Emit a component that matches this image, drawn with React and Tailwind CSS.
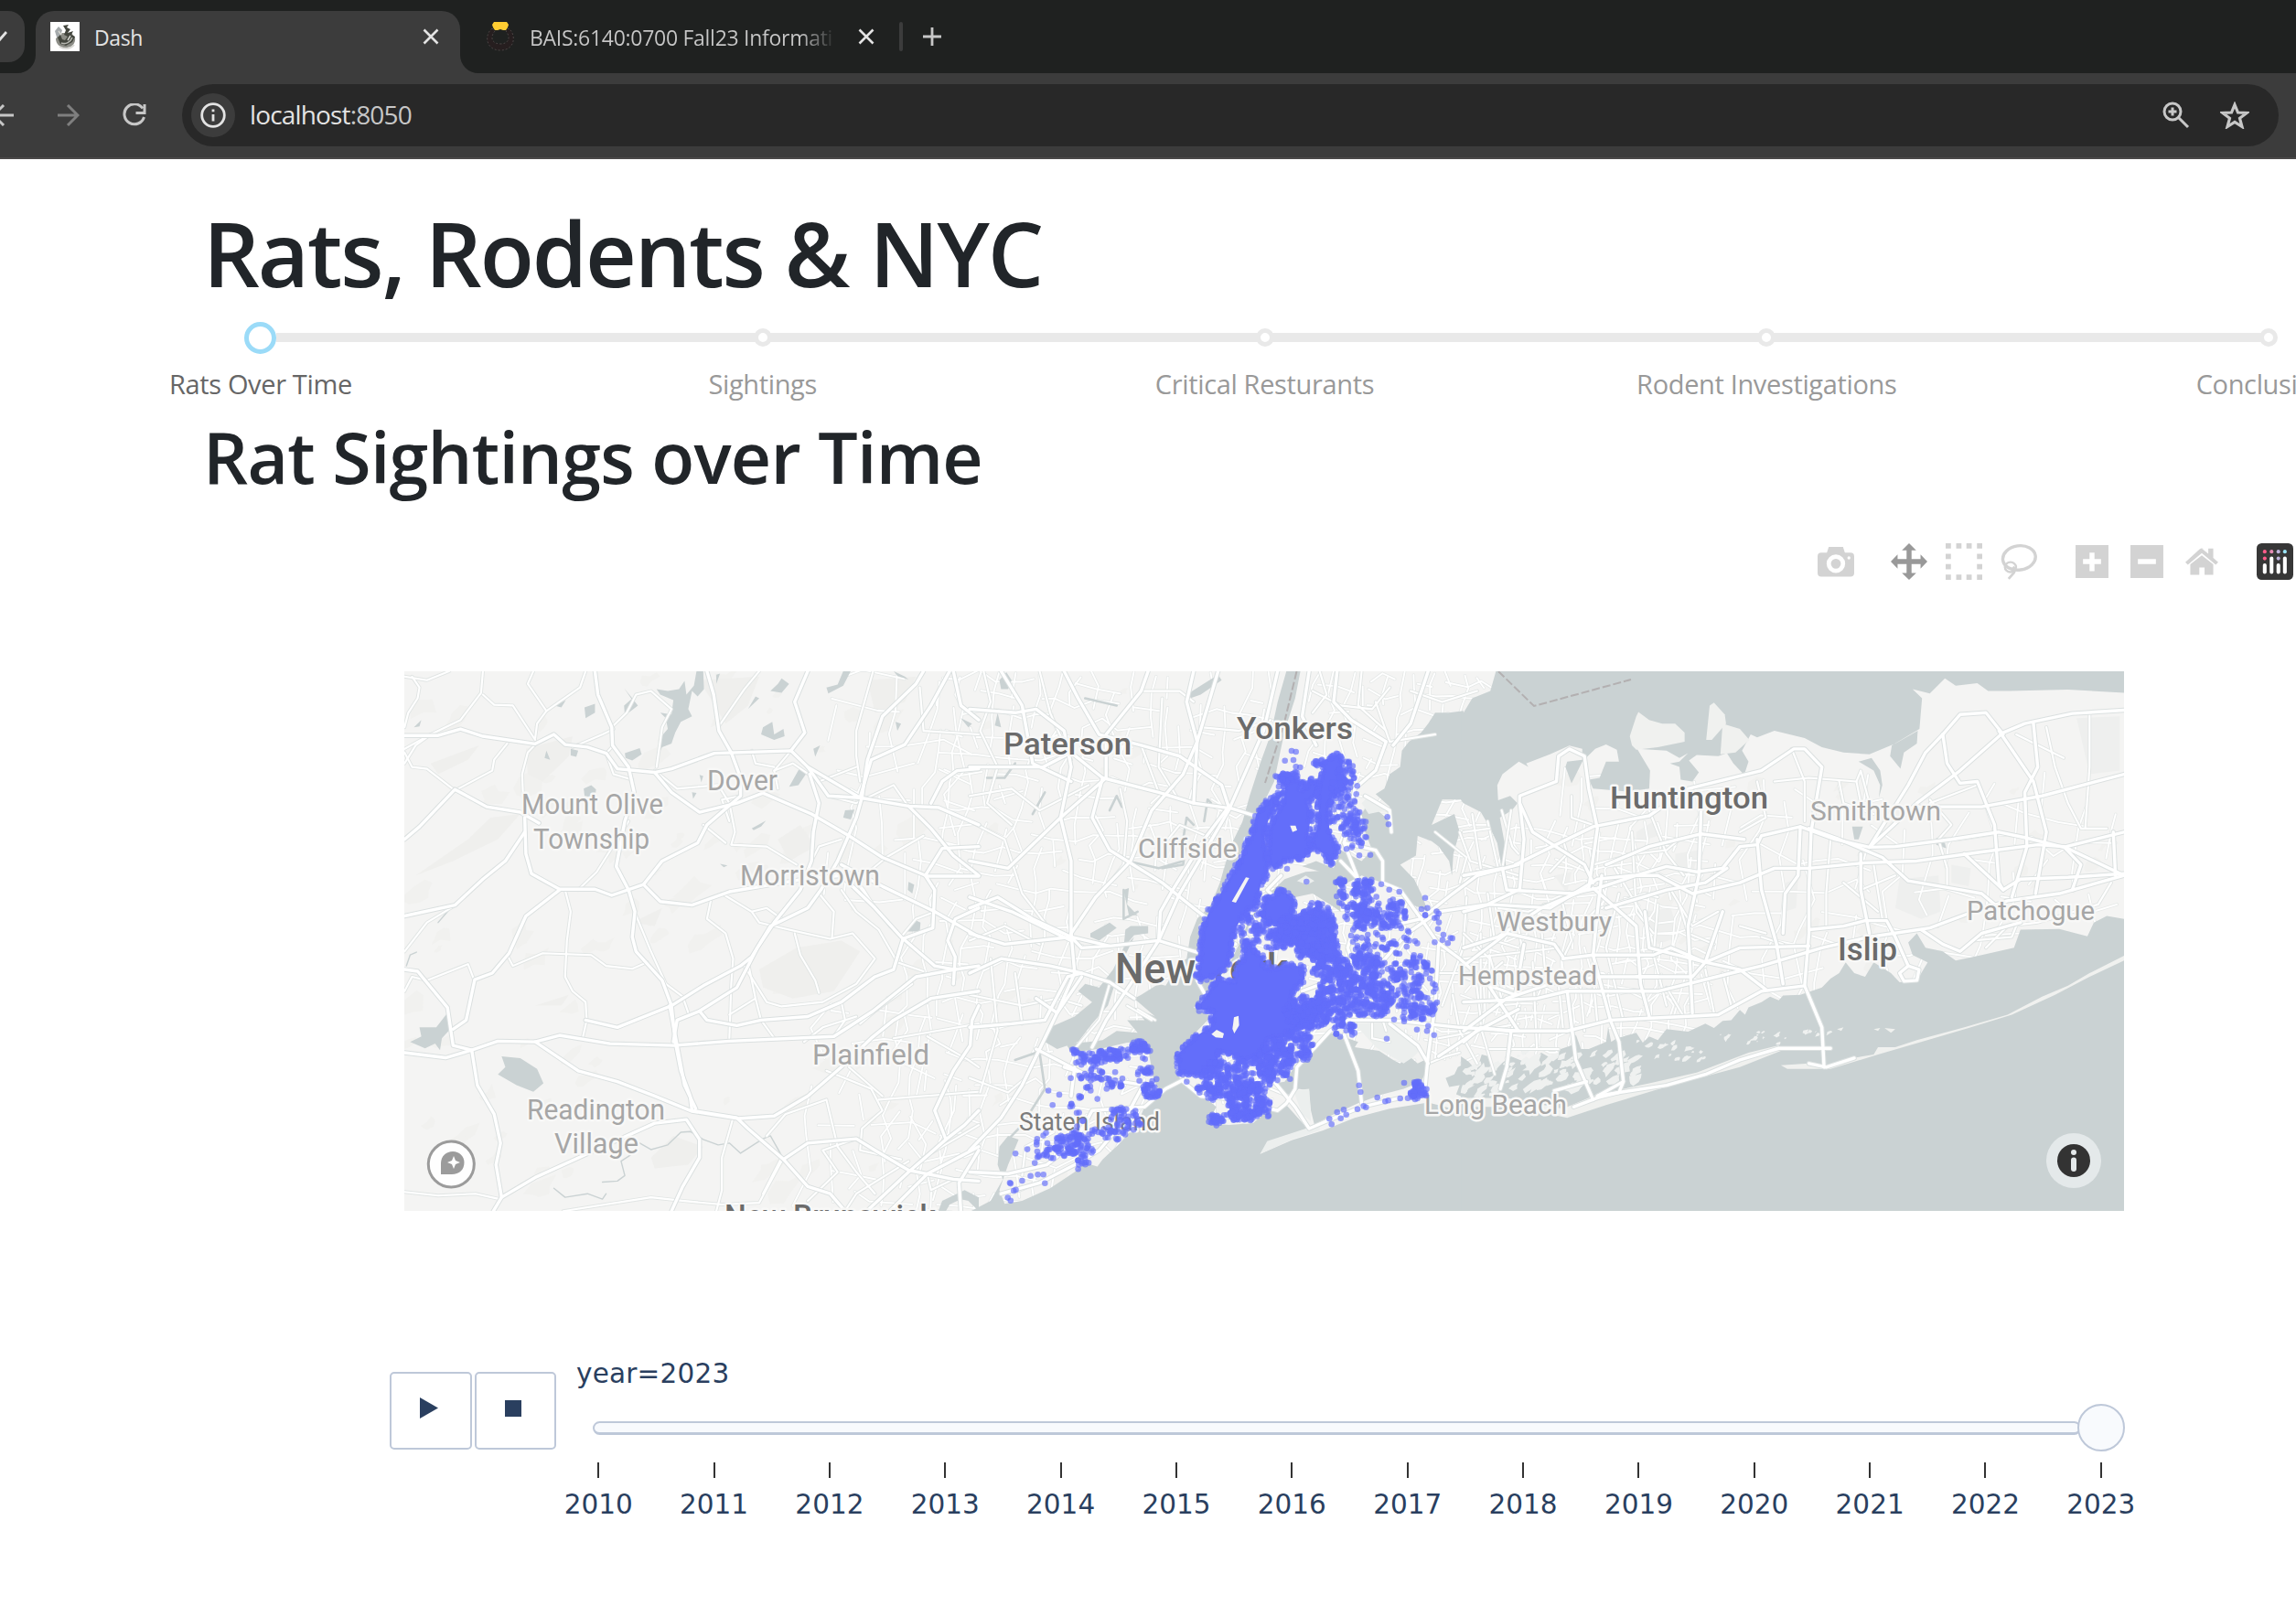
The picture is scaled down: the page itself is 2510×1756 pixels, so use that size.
import React from "react";

/* ---------- seeded random helpers ---------- */
function rng(seed) {
  let s = seed;
  return () => {
    s = (s * 1664525 + 1013904223) % 4294967296;
    return s / 4294967296;
  };
}

/* Each drawing sheet of the map has its own coordinate grid. */
const WEST = "translate(430 720) scale(0.40816 0.39541)";
const CENTER = "translate(1060 720) scale(0.38265 0.39541)";
const EAST = "translate(1600 720) scale(0.47194 0.39541)";
const CITY = "translate(1280 800) scale(0.33333)";

const westMajor = [
  "30,213 120,213 180,195 240,215 380,236 430,210 460,238 520,245 570,262 600,305 700,315 745,305 860,262 1065,255 1110,300 1165,380 1250,385 1380,408 1460,412 1568,460",
  "540,35 548,100 585,190 587,240 630,300 645,370 620,450 597,575 630,640 647,700 640,770 650,810 720,890 745,960 755,1060 770,1140 795,1210 800,1250 920,1270 950,1300 1045,1385 1110,1460 1170,1480 1210,1528",
  "840,35 858,100 872,200 905,260 930,330 930,380 840,460 815,510 720,560 670,625 585,655 540,638 445,638 370,595 355,540 352,440",
  "30,500 70,465 165,362 250,410 340,425 390,455",
  "30,712 165,682 240,610 300,560 352,480",
  "445,640 355,712 310,815 265,870 218,888 195,1000 160,1025",
  "30,860 65,865 145,965 160,1070 210,1083 280,1058 380,1060 445,1042 580,1065 750,1070 900,1058 1180,1045 1285,975 1400,880 1505,860 1568,850",
  "30,1090 140,1104 210,1083 225,1180 270,1260 287,1340 275,1400 290,1490 268,1528",
  "380,1060 495,1140 600,1170 700,1210 800,1252 925,1272 1020,1265 1110,1210 1200,1130 1280,1050 1340,1000 1440,940 1568,920",
  "290,1490 380,1435 540,1360 700,1285 785,1275 820,1330 820,1380 775,1460 745,1528",
  "515,1000 600,1020 745,960 830,905 930,850 960,825 1010,740 1110,690 1145,640 1190,560 1240,440 1255,385 1270,280 1310,160 1400,70 1420,35",
  "750,1060 760,1000 820,975 920,910 975,800 1020,730 1090,640 1120,560 1125,480 1140,400 1115,320",
  "1065,255 1102,205 1075,120 1110,35",
  "1110,300 1250,385 1280,280 1370,238 1440,130 1490,35",
  "700,315 745,370 820,425 920,400 990,372 1120,430 1220,490 1310,550 1430,602 1568,602",
  "670,625 715,672 800,682 900,645 1100,610 1200,600 1290,690 1360,770 1450,850 1505,860",
  "1200,570 1310,630 1450,700 1568,770",
  "1380,408 1440,470 1500,545 1568,600",
  "820,975 840,1000 920,1015 985,1000 1110,990 1200,950 1290,880 1340,860 1365,775 1445,745 1450,640 1425,600 1470,525 1568,520",
  "1045,1385 1110,1340 1240,1328 1290,1360 1380,1415 1500,1440 1568,1445",
  "1268,1528 1380,1420 1480,1330 1530,1290 1568,1250",
  "1330,1528 1430,1425 1568,1350",
  "1500,900 1505,825 1485,780 1505,720 1568,690",
  "1500,35 1520,130 1568,170",
  "1440,400 1470,340 1510,310 1568,305",
  "1480,1330 1450,1250 1500,1140 1545,1070 1550,1000 1568,960",
  "1520,1528 1515,1450 1568,1360",
  "740,960 780,1180 810,1245",
];
const westMinor = [
  "50,50 70,80 65,110 40,150 30,190", "240,35 235,95 180,170 100,210 30,250",
  "240,100 270,128 320,130 380,225", "380,220 385,180 410,145 360,70 375,35",
  "410,145 500,80 515,35", "305,235 270,280 265,310 165,365 90,305 50,300 30,260",
  "350,440 345,320 360,260 380,238", "585,190 625,150 650,100 690,90 745,140 720,190 705,300",
  "870,190 940,85 980,35", "700,310 760,360 870,350 900,400 915,480 905,515 1000,520 1080,570",
  "830,460 890,510", "1285,35 1240,200 1240,270 1250,340", "630,450 545,590 495,640",
  "460,640 475,700 465,780 460,880 480,920 515,950 518,1000 508,1045",
  "305,820 320,850 400,815 530,820 570,850 640,858 680,840", "850,670 840,720 890,760 910,830 905,900 900,1050",
  "650,710 690,810 730,900 775,935 790,980", "880,650 960,700 980,730 1060,750 1170,775 1230,760 1290,830 1240,900 1150,950 1040,962 1000,950 940,850",
  "1075,760 1090,820 1130,890 1140,925", "1200,640 1240,700 1300,750 1350,840 1420,865",
  "1140,650 1180,700 1175,770", "1240,620 1330,740 1360,770", "950,840 970,940 985,1000 1020,1050",
  "1000,1320 1050,1260 1160,1220 1190,1350 1240,1420 1290,1480", "1160,1140 1280,1190 1310,1250 1255,1300 1250,1360 1360,1385",
  "910,1270 880,1380 880,1470 865,1528", "455,1528 690,1490 780,1500 880,1510 980,1505 1040,1390",
  "30,1475 120,1485 220,1480 285,1495", "1040,1380 990,1480", "30,920 50,880 90,890 200,845 215,885",
  "1300,1220 1540,1200 1568,1198", "1220,1130 1310,1210", "1340,1050 1568,1010", "1430,1045 1540,1110 1568,1130",
  "1410,80 1420,200 1568,210", "1240,1328 1150,1360 1190,1420 1110,1500", "30,810 90,730 170,680",
  "1020,310 1070,290 1140,340 1240,300", "1165,380 1240,400 1340,350 1380,410", "1420,490 1320,550 1250,610",
  "1450,700 1400,720 1360,770", "900,985 970,940", "960,255 970,290 1020,300",
  "30,50 90,60 150,35", "30,290 60,240 100,210", "590,240 570,262 590,320 640,335", "480,245 560,210 590,195",
  "930,380 880,390 900,450", "1030,360 1020,310 1065,255", "1200,500 1140,520 1120,560", "1040,720 1000,690 960,700",
  "1290,690 1260,640 1200,570", "1180,1045 1210,1000 1200,950", "1250,1010 1290,975 1390,900", "1100,1060 1150,1020 1240,990",
  "1210,1528 1240,1480 1380,1390", "1430,1425 1440,1470 1500,1440", "1330,1470 1420,1380 1568,1290",
];
const centerMajor = [
  "0,300 80,300 210,300 290,260 380,330 540,370 640,400 750,415 815,435",
  "0,870 90,830 230,850 320,870 400,895 470,940",
  "0,1020 120,1010 215,1000 280,880 320,870",
  "0,1360 90,1270 150,1180 200,1080 250,980 300,870 290,760 360,660 460,560 520,420 610,320 650,230 620,120 640,35",
  "0,690 80,660 180,720 290,770 400,795 540,780 660,815",
  "270,35 310,110 370,210 490,240 600,270 720,350 740,410",
  "0,140 130,150 190,140 270,200 290,300 260,440 290,560 290,770",
  "0,560 110,580 260,440 390,330 390,210 490,90 510,35",
  "380,330 350,440 400,530 550,620 640,690 680,720",
  "540,780 600,650 680,520 740,420 790,310 840,200 880,35",
  "740,410 670,500 580,640 545,700 540,780 460,900 390,1000 350,1075",
  "90,35 150,130 180,290 290,340", "710,35 650,230 640,400",
  "0,1420 110,1425 220,1400 300,1340 350,1250 500,1240 560,1190 610,1165",
  "610,1170 660,1210 760,1220 880,1250 905,1230 930,1190 935,1130 1030,1030 1080,1000 1200,1000 1400,1020 1568,1030",
  "90,1480 200,1450 300,1400 370,1360 440,1280 490,1190",
  "1050,35 1040,120 1090,170 1190,230 1160,310 1100,360 1080,470 1070,510",
  "1070,510 1160,530 1180,560 1180,620 1230,640 1290,720 1340,790 1330,960 1310,1100 1300,1200",
  "1070,510 1110,610 1110,700 1080,800 1100,860 1060,930",
  "1060,560 1110,610", "1568,570 1450,600 1380,650 1290,720 1200,740",
  "1568,640 1480,680 1340,700 1250,760 1160,860 1060,880 950,920",
  "650,830 650,890 690,960", "890,600 850,640 900,690", "760,740 800,780",
  "870,1170 930,1240 970,1300 1030,1275 1120,1240 1230,1215",
  "1070,1040 1110,1140 1120,1230", "1200,1010 1280,1070 1310,1120",
  "1330,780 1400,830 1480,900 1568,1030", "1568,970 1450,1030 1340,1100", "1210,240 1260,180 1310,35",
  "1030,380 1080,470", "970,35 950,160 990,240", "1130,380 1200,420 1205,480",
  "660,740 760,790", "270,1130 370,1160 500,1180", "290,1210 300,1130", "190,1080 330,1150",
  "0,760 100,790 290,770 320,800 400,795", "0,660 120,700 290,780", "190,940 250,980 320,880",
];
const centerMinor = [
  "0,450 100,500 150,650 230,750", "0,780 100,740 200,790", "40,35 60,120 30,200 80,300 50,400 120,460",
  "200,35 230,150 290,280", "0,380 120,360 200,420 340,350", "430,360 450,450 440,570 400,620",
  "490,240 540,370", "550,110 540,300 590,380", "490,90 600,90 640,120", "660,190 770,200 860,170",
  "700,500 600,460 550,520", "0,930 150,960 250,940 320,960", "130,870 150,1010", "60,830 80,1030 30,1200",
  "0,1160 110,1200 160,1160", "400,900 370,1000 300,1080", "480,970 530,1000", "450,960 520,1000",
  "980,90 1060,130 1150,140 1200,80", "1120,35 1110,130 1190,200", "1160,120 1200,230 1330,210",
  "1000,35 1020,100 980,150", "1260,90 1350,120 1450,90", "1330,480 1420,550 1400,620",
  "1400,480 1430,560 1568,600", "1480,450 1510,580", "1420,660 1410,800 1350,960", "1480,650 1500,780 1568,800",
  "1340,870 1450,870 1568,920", "1380,930 1400,1030 1450,1120", "1460,760 1460,1020 1500,1150",
  "1150,1010 1150,1050 1200,1060", "1180,1000 1190,1030", "150,1430 160,1350 240,1310", "120,1480 220,1440",
  "1340,1050 1568,1010", "1310,1120 1360,1100 1400,1090", "860,1190 910,1210", "1520,420 1550,520 1568,540",
];
const eastMajor = [
  "0,600 90,580 100,640 250,650 310,635 400,600 470,575 540,590 600,580 640,520 680,515 690,490 780,465 860,500 940,522 1000,520 1130,500 1240,480 1300,495 1390,522 1530,480",
  "0,700 60,680 200,690 310,610 390,600 450,600 530,650 640,620 720,580 800,580 930,565 1050,560 1200,535 1330,515 1390,520 1530,600",
  "0,800 80,770 180,690 290,635 310,470 290,360 280,270 245,250 220,270 215,340 130,380 130,400 160,480 280,570 300,620",
  "120,570 205,520 300,465 430,435 520,360 690,310 765,250 790,250 830,300 805,480 800,640 800,760 790,905 830,1020 835,1130",
  "0,1060 40,1020 100,1030 240,1030 340,1000 510,990 590,985 690,920 790,905",
  "0,950 90,945 170,940 240,920 450,920 620,870 690,850 830,800 940,770 1080,745 1170,705 1260,670 1380,650 1530,600",
  "230,830 300,820 440,820 480,800 560,840 640,860 700,915",
  "300,820 310,700 320,600", "300,820 340,1000 360,1060 370,1170 310,1210",
  "230,825 210,790 100,760 0,850", "130,640 140,500 130,400", "240,920 260,1110 300,1220",
  "310,1215 360,1200 470,1180 560,1150 640,1110 730,1078 850,1078", "800,1120 840,1130 905,1105",
  "255,1240 310,1215", "370,1170 360,1200 310,1210", "210,1195 285,1170", "110,1030 100,1130 85,1190",
  "300,635 400,740 410,900 430,990", "550,420 545,600 520,740 530,980",
  "680,500 690,640 725,790 740,900", "780,465 775,600 745,650 740,760",
  "940,522 1050,400 1150,310 1250,205 1300,180 1410,152 1530,143",
  "1250,210 1210,150 1150,155 1110,210 1070,260 1030,350 940,522",
  "1110,210 1120,290 1150,345 1190,340 1230,460 1240,620 1250,640",
  "1050,410 1200,410 1340,380 1530,320", "1320,180 1330,300 1300,370 1305,520 1270,660",
  "1240,200 1320,340 1350,480 1325,650", "800,470 870,500 970,550 1030,615 1130,635 1200,650 1230,680",
  "920,540 920,640 940,760", "1160,540 1250,640 1290,610 1400,605 1530,595",
  "1390,520 1430,570 1410,640", "800,750 880,740 930,725 980,725 1000,770 1030,850",
  "1060,750 1110,790 1150,810 1200,760 1290,730", "1030,850 1010,870 1020,892 1050,890 1055,860 1030,850",
  "420,700 430,800 560,840 600,700", "400,880 530,880 560,840 640,800 800,795",
  "1505,480 1510,600", "0,880 120,930 140,790", "610,580 560,620 470,640 330,690",
  "0,1030 100,940 200,900 310,880 450,880", "650,500 550,485 430,520 330,570",
];
const eastMinor = [
  "90,580 110,420", "250,380 250,440 300,460", "200,590 240,540 230,500", "390,480 400,700 440,760",
  "500,680 520,760 580,790", "680,340 700,440 640,480", "720,340 800,330 910,340 920,400", "760,250 790,340 790,450",
  "870,340 880,400 950,430", "910,340 920,310 940,400", "920,640 1000,600", "850,500 840,650 840,740",
  "950,570 970,720", "1080,390 1130,460 1100,500 1120,580 1120,630", "1280,210 1390,275", "1350,190 1370,300 1400,400 1430,470 1490,470",
  "1450,150 1450,300 1440,470", "1190,350 1080,400", "690,770 740,790", "160,840 170,1080", "300,880 310,1010",
  "220,900 230,1020", "270,900 280,1030", "60,820 90,950", "0,760 60,830 60,950", "120,700 140,830", "180,740 190,880 170,940",
  "90,980 220,980", "40,1000 30,900 90,840", "130,960 110,1030", "60,1080 220,1080", "360,650 330,800 370,1000",
  "450,680 440,820 470,960", "480,640 530,740 590,700", "560,860 580,980", "600,870 620,960", "470,910 510,990",
  "640,740 700,760", "230,680 250,780 230,830", "320,690 420,650 450,660", "430,420 470,540 510,600",
  "350,580 420,720", "1180,780 1270,770 1280,740", "880,620 960,700", "1210,800 1260,740 1330,730 1470,680 1500,620",
  "300,570 400,540 470,530 500,500", "0,830 150,810 220,800", "80,690 150,700 190,680", "20,430 40,580", "0,480 60,470",
];

const centerWater = [
  // river from the top, the harbour and the ocean below it
  "905,35 945,35 930,110 900,200 870,340 850,380 820,430 810,470 780,530 740,600 700,690 670,740 660,800 650,870 660,900 700,880 680,930 640,965 690,990 650,1030 600,1080 585,1110 590,1150 620,1178 660,1205 705,1240 680,1285 740,1290 810,1285 850,1252 880,1245 905,1235 970,1305 900,1320 850,1340 830,1370 920,1332 1010,1305 1100,1270 1200,1245 1310,1228 1400,1250 1568,1240 1568,1530 0,1530 60,1500 95,1440 80,1400 85,1350 110,1320 140,1330 110,1400 85,1470 100,1508 150,1500 230,1465 300,1420 330,1395 365,1405 380,1385 430,1340 480,1285 500,1240 530,1222 545,1205 525,1160 512,1090 505,1060 450,1062 380,1078 290,1090 275,1065 340,1060 380,1055 420,1030 480,1035 450,1000 500,1000 470,965 530,990 470,940 490,930 540,900 560,905 600,840 620,830 630,770 650,720 690,680 715,620 745,520 780,450 800,380 830,290 860,210 880,120",
  // river mouth between the boroughs
  "655,890 700,880 745,840 765,800 800,720 845,660 900,610 960,590 1040,585 1090,590 1110,600 1050,620 1060,700 1030,680 980,650 930,660 890,640 840,665 800,730 780,800 760,850 700,890 670,935",
  // sound up to the grid's right edge
  "1411,145 1370,150 1330,150 1310,180 1290,205 1255,230 1235,255 1230,300 1200,320 1185,360 1160,375 1200,410 1210,470 1190,440 1140,400 1120,430 1130,480 1150,530 1120,560 1060,530 1040,580 990,560 950,575 1040,600 1060,630 1120,600 1150,610 1180,620 1230,640 1260,680 1290,690 1310,700 1290,650 1270,610 1230,570 1275,545 1280,490 1265,485 1320,505 1340,520 1370,560 1378,600 1382,540 1400,480 1385,430 1320,460 1350,390 1412,390",
  // lagoon behind the barrier beach
  "870,1175 900,1170 935,1120 975,1075 1030,1035 1065,1045 1110,1060 1100,1075 1170,1085 1210,1110 1230,1120 1250,1095 1280,1120 1300,1110 1310,1130 1290,1170 1240,1190 1180,1205 1110,1230 1030,1265 985,1290 975,1250 970,1195 940,1190 910,1220",
  "330,900 370,910 410,860 440,800 470,770 440,830 415,900 395,960 350,1010 310,1060 250,1080 215,1060 230,1020 300,990 350,950 310,920",
  "85,60 105,38 120,60 110,85 90,85", "620,100 660,75 710,45 720,60 660,100 630,110",
  "440,640 455,635 450,680 480,710 455,710", "80,150 90,190 72,185", "460,740 510,740 510,760 470,765 440,800 445,750",
  "345,760 400,730 420,745 370,780 345,770",
  "1385,1150 1395,1130 1415,1120 1415,1215 1390,1205 1400,1180 1370,1185 1360,1160",
];
const eastWater = [
  "75,35 62,90 20,110 0,150 -6,150 -6,392 0,400 40,425 62,470 78,510 88,576 98,576 95,510 84,440 112,420 125,400 108,380 80,392 78,350 90,320 128,285 150,300 145,290 200,265 245,241 275,250 275,280 240,285 236,300 250,345 275,285 305,250 330,238 355,252 360,285 330,285 315,330 290,335 300,360 380,368 430,360 432,310 412,270 402,250 470,255 500,275 520,262 500,285 478,290 500,300 503,335 530,340 545,315 522,282 540,267 590,270 610,262 625,290 650,322 660,285 645,255 665,210 680,218 720,200 790,220 830,245 880,260 940,265 1000,235 1052,200 1050,235 1020,260 1012,305 988,270 992,240 1056,195 1062,110 1040,85 1080,97 1115,55 1140,75 1190,68 1215,90 1265,90 1400,86 1530,95 1530,35",
  "-6,1100 12,1115 30,1140 42,1095 58,1100 65,1140 110,1100 150,1120 180,1090 210,1110 225,1080 250,1070 260,1040 272,1080 290,1080 330,1060 335,1020 342,1060 355,1050 385,1040 400,1035 415,1062 430,1045 450,1055 470,1025 520,1032 560,1010 580,1022 600,1002 620,1000 640,972 652,985 660,965 690,950 710,935 730,945 740,932 780,930 830,910 850,885 870,870 885,840 905,870 930,880 950,840 990,870 1010,895 1050,890 1075,840 1040,820 1030,785 1050,760 1070,800 1110,810 1140,835 1200,820 1275,800 1290,750 1380,748 1445,768 1460,730 1490,712 1530,720 1530,1530 -6,1530",
  "1095,495 1115,510 1118,525 1095,515", "900,465 925,465 915,500 905,500",
  "945,275 965,310 970,350 962,385 965,350 950,310 915,285",
];
const eastLand = [
  "385,215 400,160 405,148 430,170 460,180 490,180 512,205 512,230 450,245 400,252 390,240",
  "562,225 570,130 580,122 605,155 608,180 575,225", "600,180 640,195 662,225 630,260 595,265",
  "0,1215 100,1215 230,1245 310,1205 430,1175 540,1145 660,1090 730,1070 735,1085 640,1130 530,1165 440,1195 330,1235 240,1270 200,1260 120,1240 0,1240",
  "735,1125 800,1120 840,1130 900,1105 950,1095 960,1075 1000,1075 1050,1055 1160,1020 1260,985 1340,935 1400,905 1450,870 1530,822 1530,835 1450,880 1370,930 1270,985 1170,1022 1060,1060 960,1095 850,1135 750,1135",
  "950,1025 965,1022 960,1030", "975,1022 1000,1025 990,1035", "865,1025 880,1020 875,1030",
];
const westWater = [
  "830,35 832,85 815,105 800,90 790,140 800,160 770,175 755,205 745,235 720,245 712,262 710,225 735,195 730,165 715,150 745,155 750,115 715,100 705,85 735,90 765,85 780,62 785,100 805,75 812,35",
  "1225,35 1205,75 1165,97 1160,80 1190,72 1205,35", "1040,55 1060,70 1040,95 1010,90 1030,70",
  "980,110 950,140 970,105", "618,82 640,110 655,130 620,158 618,130 638,112", "512,135 540,125 540,150 515,165",
  "432,130 462,115 450,135", "1015,175 1020,210 1045,195 1048,215 1020,225 985,210 990,190",
  "620,262 660,248 665,265 640,282 622,275", "510,360 530,350 543,362 540,385 512,380", "1060,355 1090,300 1108,315 1085,350",
  "145,980 148,1030 130,1050 125,1083 112,1065 85,1078 45,1060 75,1045 70,1020 115,1020",
  "290,1100 340,1105 385,1135 402,1175 375,1198 330,1180 280,1150 300,1130",
  "1210,420 1235,418 1225,445 1205,440", "1380,618 1395,625 1390,650 1378,640", "1395,722 1412,730 1410,755 1375,755",
  "960,470 998,448 985,465 965,475", "475,250 495,255 490,272 475,268", "410,255 420,280 405,275",
  "1125,250 1143,240 1130,272", "1345,175 1360,180 1350,200", "1520,165 1550,180 1540,190",
  "55,190 75,170 70,188", "875,568 895,572 885,577", "865,45 875,42 865,70", "1470,1500 1530,1470 1568,1490 1568,1528 1540,1500 1520,1495 1490,1510 1480,1528 1460,1528",
  "820,322 830,325 825,342", "800,370 812,372 803,388", "1340,35 1370,50 1380,58 1350,48",
];
const westStreams = [
  "660,1340 690,1358 735,1345 770,1310 795,1308 830,1330 870,1345 900,1340 930,1368 990,1328 1010,1320 1040,1375",
  "430,1465 460,1490 520,1480 560,1495 570,1480", "560,1448 600,1445 620,1430 610,1390 640,1370",
  "120,730 145,700 175,670", "270,590 300,560", "35,850 45,820 62,812",
];
const relief = [
  "355,250 480,215 470,270 400,340 360,320", "980,860 1080,800 1200,780 1250,810 1180,920 1070,940 990,910",
  "60,600 200,500 260,440 340,430 280,500 160,560", "690,1380 750,1320 830,1350 790,1400 700,1410",
  "820,60 980,50 950,130 890,180", "640,730 720,690 700,740", "1030,500 1090,460 1130,520 1060,560",
  "100,290 230,240 200,280 120,320", "1270,60 1400,50 1370,120 1290,150", "380,960 470,930 450,960",
];
const eastRelief = [
  "1010,610 1100,600 1105,700 1060,720 1000,690", "1420,165 1520,160 1520,310 1450,320", "745,620 775,610 770,690 745,700",
  "420,700 480,690 500,770 450,790", "490,540 545,530 530,600 490,580", "1130,570 1175,580 1170,630 1130,620",
  "210,600 250,590 240,650", "400,480 440,450 450,490 400,510",
];

const solids = [
  "370,200 330,215 300,250 280,270 265,340 240,380 225,430 180,500 150,555 130,580 105,640 95,700 95,760 85,800 100,815 150,800 190,765 200,700 215,640 240,600 280,570 295,500 320,460 315,400 305,340 320,290 345,240",
  "370,140 400,150 430,165 420,195 445,185 450,150 490,170 470,215 445,230 460,270 450,340 465,370 440,415 380,420 340,450 320,430 320,330 340,280 370,230 375,190",
  "470,105 500,95 545,75 565,95 555,140 580,190 530,210 515,260 520,320 548,390 525,440 500,400 450,370 480,320 485,260 480,200 490,160 500,120",
  "360,515 405,550 400,600 385,635 330,630 295,610 310,545 340,540",
  "370,620 420,605 480,570 520,610 535,660 550,740 575,755 545,765 520,740 500,775 475,745 460,725 430,740 400,690 340,690 330,660 370,640",
  "240,685 265,690 270,720 305,740 300,770 340,780 375,765 430,770 440,810 400,850 400,890 440,910 500,850 500,900 470,960 420,970 390,1000 320,1010 290,1060 250,1080 200,1060 150,1050 160,1100 120,1125 60,1125 25,1120 22,1060 80,1000 130,970 140,915 85,910 120,860 150,810 210,825 215,770 240,740",
];
const openings = [
  "246,478 257,480 213,561 200,557", "133,992 150,978 174,990 170,1005 147,1003",
  "207,937 222,932 224,963 208,990 202,975", "391,308 409,308 414,323 399,329",
];

// [cx, cy, rx, ry, count] in the CITY grid
const cityClusters = [
  [220, 1130, 110, 60, 170], [250, 1210, 60, 60, 130], [145, 1272, 34, 11, 30], [225, 1258, 50, 16, 45],
  [340, 1080, 55, 60, 130], [140, 1180, 60, 24, 35], [400, 1030, 62, 50, 70], [450, 920, 75, 50, 130],
  [560, 870, 70, 80, 100], [650, 830, 90, 95, 130], [640, 780, 50, 50, 34], [690, 880, 30, 60, 30], [800, 850, 75, 95, 75], [820, 910, 40, 35, 24],
  [700, 590, 75, 50, 50], [625, 600, 50, 45, 80], [558, 520, 16, 42, 26], [632, 515, 34, 28, 40],
  [690, 680, 110, 60, 34], [640, 750, 45, 50, 36], [790, 770, 70, 40, 25], [570, 980, 38, 22, 22],
  [558, 220, 40, 90, 40], [605, 320, 32, 60, 45], [280, 640, 50, 45, 40], [385, 150, 35, 14, 26],
  [575, 140, 28, 40, 22], [862, 610, 28, 45, 6], [890, 680, 36, 22, 6], [740, 600, 30, 40, 14],
  [812, 1178, 26, 30, 34], [500, 745, 50, 55, 50], [480, 640, 60, 70, 80], [310, 1220, 28, 40, 12],
  [350, 690, 50, 26, 20], [540, 800, 40, 36, 22], [440, 1040, 30, 40, 12], [600, 880, 90, 55, 50], [410, 650, 60, 50, 60],
];
const cityPoints = [
  [445, 492], [381, 450], [710, 280], [714, 304], [708, 1007], [617, 1160], [622, 1182], [520, 1270], [527, 1288], [557, 1268],
  [575, 1256], [567, 1240], [545, 1248], [612, 1238], [632, 1228], [640, 1232], [677, 1200], [703, 1213], [713, 1210], [752, 1203],
  [777, 1202], [765, 1152], [822, 582], [834, 545], [749, 525], [690, 500], [716, 518], [658, 485], [863, 995], [807, 977], [844, 965],
  [840, 982], [765, 950], [732, 944], [52, 1148], [88, 1170], [391, 1139], [434, 1076], [462, 1028], [324, 1218], [290, 1254],
  [654, 404], [618, 406], [576, 385], [611, 178], [608, 205], [357, 165], [354, 180], [396, 63], [410, 66], [374, 95], [402, 93],
  [410, 115], [424, 117], [320, 757], [318, 760], [368, 137], [408, 132],
];
// same, in the CENTER grid
const southClusters = [
  [350, 1105, 50, 22, 30], [415, 1092, 42, 20, 32], [485, 1076, 24, 18, 40], [375, 1165, 62, 30, 32], [510, 1150, 28, 42, 22],
  [520, 1200, 24, 14, 20], [435, 1275, 50, 36, 34], [283, 1340, 40, 34, 55], [215, 1350, 24, 38, 13], [335, 1320, 30, 50, 18],
  [310, 1230, 20, 32, 7], [410, 1310, 40, 20, 16], [298, 1085, 14, 8, 6], [325, 1385, 20, 22, 8],
];
const southPoints = [
  [225, 1195], [256, 1206], [237, 1235], [131, 1369], [165, 1357], [186, 1395], [115, 1450], [117, 1452], [150, 1444], [174, 1431],
  [195, 1427], [211, 1427], [215, 1451], [126, 1472], [132, 1469], [109, 1491], [117, 1499], [289, 1160], [310, 1412], [365, 1218],
];

function scatter(clusters, seed) {
  const r = rng(seed);
  const out = [];
  clusters.forEach(([cx, cy, rx, ry, n]) => {
    for (let i = 0; i < n; i++) {
      const a = r() * Math.PI * 2;
      const d = 1.1 * Math.pow(r(), 0.58);
      const x = cx + Math.cos(a) * rx * d;
      const y = cy + Math.sin(a) * ry * d;
      out.push([x, y]);
      if (r() < 0.55) out.push([x + (r() - 0.5) * 16, y + (r() - 0.5) * 16]);
    }
  });
  return out;
}
function parse(s) {
  return s.split(" ").map((p) => p.split(",").map(Number));
}
function fringe(polys, seed) {
  const r = rng(seed);
  const out = [];
  polys.forEach((s) => {
    const pts = parse(s);
    pts.forEach((p, i) => {
      const q = pts[(i + 1) % pts.length];
      const len = Math.hypot(q[0] - p[0], q[1] - p[1]);
      const n = Math.ceil(len / 7);
      for (let k = 0; k < n; k++) {
        const t = r();
        out.push([p[0] + (q[0] - p[0]) * t + (r() - 0.5) * 11, p[1] + (q[1] - p[1]) * t + (r() - 0.5) * 11]);
      }
    });
  });
  return out;
}
const cityDots = [...fringe(solids, 7), ...scatter(cityClusters, 21), ...cityPoints].map(([x, y]) => [1280 + x / 3, 800 + y / 3]);
const southDots = [...scatter(southClusters, 5), ...southPoints].map(([x, y]) => [1060 + x * 0.38265, 720 + y * 0.39541]);

/* local streets: a loose, jittered mesh over built-up land */
function mesh(x0, y0, x1, y1, step, seed, skip) {
  const r = rng(seed);
  const out = [];
  const jitter = () => (r() - 0.5) * step * 0.7;
  const walk = (outer0, outer1, inner0, inner1, place) => {
    for (let a = outer0; a < outer1; a += step) {
      let seg = [];
      for (let b = inner0; b < inner1; b += step) {
        if (r() < skip) {
          if (seg.length > 1) out.push(seg.join(" "));
          seg = [];
        }
        seg.push(place(a, b));
      }
      if (seg.length > 1) out.push(seg.join(" "));
    }
  };
  walk(y0, y1, x0, x1, (y, x) => (x + jitter()).toFixed(1) + "," + (y + jitter() + (x - x0) * 0.08).toFixed(1));
  walk(x0, x1, y0, y1, (x, y) => (x + jitter() - (y - y0) * 0.12).toFixed(1) + "," + (y + jitter()).toFixed(1));
  return out;
}
const streets = [
  ...mesh(1030, 736, 1400, 1330, 21, 3, 0.28), ...mesh(1440, 736, 1640, 900, 18, 9, 0.3),
  ...mesh(1560, 900, 1870, 1160, 17, 14, 0.28), ...mesh(1700, 850, 2330, 1110, 32, 17, 0.35), ...mesh(1330, 880, 1570, 1220, 20, 31, 0.4),
  ...mesh(900, 1100, 1060, 1330, 30, 51, 0.4), ...mesh(920, 736, 1060, 1000, 34, 61, 0.45),
];

function blobs(zones, seed) {
  const r = rng(seed);
  const out = [];
  zones.forEach(([x, y, w, h, n, size]) => {
    for (let i = 0; i < n; i++) {
      const cx = x + r() * w;
      const cy = y + r() * h;
      const s = size * (0.3 + r());
      const pts = [];
      for (let k = 0; k < 8; k++) {
        const a = (k / 8) * Math.PI * 2;
        const d = s * (0.4 + r() * 0.9);
        pts.push((cx + Math.cos(a) * d - Math.sin(a) * d * 0.2).toFixed(1) + "," + (cy + Math.sin(a) * d * 0.8 - Math.cos(a) * d * 0.3).toFixed(1));
      }
      out.push(pts.join(" "));
    }
  });
  return out;
}
/* marsh islets in the back bays */
const islets = blobs([[1602, 1160, 60, 44, 30, 6], [1660, 1150, 70, 40, 30, 7], [1720, 1150, 70, 34, 26, 7], [1790, 1138, 80, 22, 16, 4], [1880, 1128, 75, 14, 14, 3.5], [1970, 1126, 50, 8, 5, 3]], 77);
/* faint woodland patches */
const woods = blobs([[442, 740, 560, 560, 90, 15], [1000, 740, 380, 560, 30, 9], [1700, 850, 600, 220, 36, 11]], 99);

function Roads({ lines, width, color, transform }) {
  return (
    <g transform={transform} fill="none" stroke={color} strokeWidth={width} strokeLinejoin="round" strokeLinecap="round">
      {lines.map((p, i) => (
        <polyline key={i} points={p} vectorEffect="non-scaling-stroke" />
      ))}
    </g>
  );
}
function Shapes({ shapes, color, transform }) {
  return (
    <g transform={transform} fill={color}>
      {shapes.map((p, i) => (
        <polygon key={i} points={p} />
      ))}
    </g>
  );
}

const places = [
  ["Dover", 773, 864, 77, 31, 0], ["Mount Olive", 570, 890, 155, 31, 0], ["Township", 583, 928, 127, 31, 0],
  ["Morristown", 809, 968, 153, 31, 0], ["Plainfield", 888, 1164, 128, 31, 0], ["Readington", 576, 1224, 151, 31, 0],
  ["Village", 606, 1261, 92, 31, 0], ["Cliffside Park", 1244, 938, 175, 30, 0], ["Westbury", 1636, 1018, 126, 30, 0],
  ["Hempstead", 1594, 1077, 152, 30, 0], ["Smithtown", 1979, 897, 143, 30, 0], ["Patchogue", 2150, 1006, 140, 30, 0],
  ["Long Beach", 1557, 1218, 156, 30, 0], ["Paterson", 1097, 825, 140, 34, 1], ["Yonkers", 1352, 808, 127, 34, 1],
  ["Huntington", 1760, 884, 173, 34, 1], ["Islip", 2009, 1050, 65, 35, 1], ["New Brunswick", 792, 1342, 231, 35, 1],
  ["New York", 1219, 1075, 189, 46, 1], ["Staten Island", 1114, 1236, 154, 27, 2],
];

function MapView() {
  const tone = ["#a6a6a6", "#6b6b6b", "#7c7c7c"];
  const groups = [
    [WEST, westMajor, westMinor], [CENTER, centerMajor, centerMinor], [EAST, eastMajor, eastMinor],
  ];
  return (
    <svg className="block h-[590px] w-[1880px]" viewBox="442 734 1880 590">
      <rect x="442" y="734" width="1880" height="590" fill="#f4f4f3" />
      <Shapes shapes={woods} color="#f1f1ef" />
      <Shapes shapes={relief} color="#efefed" transform={WEST} />
      <Shapes shapes={eastRelief} color="#eeefee" transform={EAST} />
      <Roads lines={streets} width={3.4} color="#e6e9e8" />
      <Roads lines={streets} width={1.8} color="#fff" />
      <Shapes shapes={centerWater} color="#cad2d3" transform={CENTER} />
      <Shapes shapes={eastWater} color="#cad2d3" transform={EAST} />
      <Shapes shapes={westWater} color="#cad2d3" transform={WEST} />
      <Shapes shapes={eastLand} color="#f0f1ef" transform={EAST} />
      <Shapes shapes={islets} color="#eff1f0" />
      <Shapes shapes={["1100,1010 1210,1005 1290,1080 1270,1100 1240,1120 1160,1075", "925,1195 970,1190 975,1280 950,1260", "830,1370 850,1335 960,1300 1000,1290 1000,1305 920,1330", "935,615 960,600 985,615 965,625", "1120,400 1140,380 1190,420 1140,430"]} color="#ecefee" transform={CENTER} />
      <Roads lines={westStreams} width={1.4} color="#cad2d3" transform={WEST} />
      <Roads lines={["180,430 215,370", "610,500 620,440 640,460", "670,450 680,390 690,400", "50,330 100,330 130,290", "400,420 420,380 435,410", "200,1090 215,1190 150,1290 100,1340", "130,1110 190,1090", "550,580 610,570 620,500", "440,640 440,720 480,700", "450,560 540,580 610,560", "330,110 420,130"]} width={2.6} color="#cad2d3" transform={CENTER} />
      {groups.map(([t, , minor], i) => (
        <g key={i}>
          <Roads lines={minor} width={4} color="#e1e5e4" transform={t} />
          <Roads lines={minor} width={2.1} color="#fff" transform={t} />
        </g>
      ))}
      {groups.map(([t, major], i) => (
        <Roads key={i} lines={major} width={5.4} color="#dbe0e0" transform={t} />
      ))}
      {groups.map(([t, major], i) => (
        <Roads key={i} lines={major} width={3.4} color="#fff" transform={t} />
      ))}
      <g fill="none" stroke="#b3b0b1" strokeWidth="2" strokeDasharray="9 3">
        <path d="M1417.500 734L1404 790L1383 856" />
        <path d="M1638 734L1677 772L1783 743" />
      </g>
      <g fontFamily="Roboto, 'Open Sans', sans-serif" stroke="#f8f8f7" strokeLinejoin="round" paintOrder="stroke">
        {places.map(([name, x, y, w, size, k]) => (
          <text key={name} x={x} y={y} textLength={w} lengthAdjust="spacingAndGlyphs" fontSize={size} fontWeight={k === 1 ? 500 : 400} fill={tone[k]} strokeWidth="5">
            {name}
          </text>
        ))}
      </g>
      <Shapes shapes={solids} color="#636efa" transform={CITY} />
      <Shapes shapes={openings} color="#f4f4f3" transform={CITY} />
      <g fill="#636efa" fillOpacity="0.66">
        {cityDots.concat(southDots).map(([x, y], i) => (
          <circle key={i} cx={x.toFixed(1)} cy={y.toFixed(1)} r="3.3" />
        ))}
      </g>
      <g>
        <circle cx="493.300" cy="1273" r="25" fill="#fff" fillOpacity="0.9" stroke="#9b9b9b" strokeWidth="3" />
        <path d="M482 1284V1272C482 1264 488 1259 495 1259C502 1259 507.500 1264 507.500 1271C507.500 1279 502 1284 494 1284Z" fill="#9b9b9b" />
        <path d="M496 1264L498 1269L503 1271L498 1273L496 1278L494 1273L489 1271L494 1269Z" fill="#fff" />
      </g>
      <g>
        <circle cx="2267" cy="1269" r="30" fill="#e4e9ea" />
        <circle cx="2267" cy="1269" r="18" fill="#333" />
        <circle cx="2267" cy="1260" r="3" fill="#e4e9ea" />
        <path d="M2267 1268.500V1278" stroke="#e4e9ea" strokeWidth="6" strokeLinecap="round" />
      </g>
    </svg>
  );
}

/* ---------- browser chrome ---------- */
function Close() {
  return (
    <svg className="size-[18px]" viewBox="0 0 18 18" stroke="#e3e3e3" strokeWidth="2.600">
      <path d="M1.500 1.500L16.500 16.500M16.500 1.500L1.500 16.500" />
    </svg>
  );
}
function RatIcon() {
  return (
    <svg className="size-8 shrink-0 bg-white" viewBox="0 0 32 32" fill="none">
      <path d="M5 10L9 5L13 9L11 15L14 22L8 20Z" fill="#a5aaac" />
      <path d="M6 18C6 25 12 29 18 28C24 28 28 23 27 17L23 12L13 12L9 16Z" fill="#8b8c85" />
      <path d="M14 4L20 3L18 6L22 8L19 12L25 10L23 14L27 16L24 22L17 26L11 24L8 17L11 14L13 19L16 20L19 16L15 14L17 9Z" fill="#42453d" />
      <path d="M12 23C17 25 22 22 24 17" stroke="#b5b6af" strokeWidth="1.600" />
      <path d="M10 27C15 30 22 30 26 25" stroke="#d8d8d4" strokeWidth="2" />
      <path d="M19 20L22 15M9 10L12 14" stroke="#d5d6d0" strokeWidth="1.500" />
    </svg>
  );
}
function CourseIcon() {
  return (
    <svg className="h-8 w-[34px] shrink-0" viewBox="0 0 34 32">
      <path d="M8 7C-1 14 1 31 17 31C33 31 35 14 26 7L23 10C29 17 26 24 17 24C8 24 5 17 11 10Z" fill="#261e1f" stroke="#4a4444" strokeWidth="1" strokeDasharray="2 2" />
      <path d="M10 0H24L26 3L25 6L23 9H20L17 8L14 9H11L9 6L8 3Z" fill="#ffcd32" />
    </svg>
  );
}

function Browser() {
  return (
    <header className="h-[174px] bg-[#3c3c3c] font-['Open_Sans',sans-serif] text-[#e3e3e3]">
      <div className="flex h-20 bg-[#1f2120]">
        <div className="mt-3 flex h-14 w-[27px] items-center rounded-r-[18px] bg-[#3c3c3c]">
          <svg className="h-4 w-2" viewBox="0 0 8 16" fill="none" stroke="#e3e3e3" strokeWidth="2.800">
            <path d="M-6 4L0 11L7 3" />
          </svg>
        </div>
        <div className="relative ml-3 mt-3 flex h-[68px] w-[464px] items-center rounded-t-[20px] bg-[#3c3c3c] pl-4">
          <svg className="absolute -left-5 bottom-0 size-5" viewBox="0 0 20 20"><path d="M20 0V20H0A20 20 0 0 0 20 0Z" fill="#3c3c3c" /></svg>
          <svg className="absolute -right-5 bottom-0 size-5" viewBox="0 0 20 20"><path d="M0 0V20H20A20 20 0 0 1 0 0Z" fill="#3c3c3c" /></svg>
          <div className="-mt-3 flex w-full items-center">
            <RatIcon />
            <span className="ml-4 mt-px grow text-[23px] leading-8 tracking-[-0.4px]">Dash</span>
            <span className="mr-[23px]"><Close /></span>
          </div>
        </div>
        <div className="ml-[27px] flex h-20 items-center">
          <CourseIcon />
          <div className="ml-[15px] w-[336px] overflow-hidden">
            <span className="mt-px block whitespace-nowrap bg-linear-to-r from-[#c7c7c7] from-88% to-[#1f2120] to-100% bg-clip-text text-[23px] leading-8 tracking-[-0.28px] text-transparent">BAIS:6140:0700 Fall23 Informati</span>
          </div>
          <span className="ml-[23px]"><Close /></span>
          <span className="ml-[27px] h-8 w-1 rounded bg-[#3c3c3c]" />
          <svg className="ml-[22px] size-5" viewBox="0 0 20 20" stroke="#c7c7c7" strokeWidth="2.800"><path d="M10 0V20M0 10H20" /></svg>
        </div>
      </div>
      <div className="flex h-[94px] items-center border-b-2 border-[#4a4848] pr-[19px]">
        <svg className="h-6 w-4" viewBox="0 0 16 24" fill="none" stroke="#c7c7c7" strokeWidth="3"><path d="M-8 12H15M4 1L-7 12L4 23" /></svg>
        <svg className="ml-[47px] size-6" viewBox="0 0 24 24" fill="none" stroke="#7f7f7f" strokeWidth="3"><path d="M0 12H22M11 1L22 12L11 23" /></svg>
        <svg className="ml-[47px] size-[26px]" viewBox="0 0 26 26" fill="none" stroke="#c7c7c7" strokeWidth="3"><path d="M22 5.500A11 11 0 1 0 23.500 15M24 1V10.500H14.500" /></svg>
        <div className="ml-[39px] flex h-[68px] grow items-center rounded-full bg-[#282828] pl-2.5">
          <div className="flex size-12 items-center justify-center rounded-full bg-[#3c3c3c]">
            <svg className="size-7" viewBox="0 0 28 28" fill="none" stroke="#e3e3e3" strokeWidth="2.800"><circle cx="14" cy="14" r="12.300" /><path d="M14 13V20.500M14 7.500V10.300" /></svg>
          </div>
          <span className="-mt-0.5 ml-4 grow text-[28px] leading-9 tracking-[-0.85px]">localhost<span className="text-[#c7c7c7]">:8050</span></span>
          <svg className="h-[30px] w-[30px]" viewBox="0 0 30 30" fill="none" stroke="#c7c7c7" strokeWidth="3"><circle cx="11" cy="11" r="9" /><path d="M17.500 17.500L28 28M11 6.500V15.500M6.500 11H15.500" /></svg>
          <svg className="ml-[33px] mr-8 h-[30px] w-8" viewBox="0 0 32 30" fill="none" stroke="#c7c7c7" strokeWidth="3.200"><path d="M16 3.500L19.500 12L29 12.500L21.500 18.300L24 27.500L16 22.500L8 27.500L10.500 18.300L3 12.500L12.500 12Z" /></svg>
        </div>
      </div>
    </header>
  );
}

/* ---------- page parts ---------- */
const steps = ["Rats Over Time", "Sightings", "Critical Resturants", "Rodent Investigations", "Conclusions"];

function Steps() {
  return (
    <div className="flex h-[100px] w-[2745px]">
      {steps.map((s, i) => (
        <div key={s} className="flex w-[548.800px] shrink-0 flex-col items-center">
          <div className="flex h-9 w-full items-center">
            <div className={i ? "h-2.5 grow bg-[#e9e9e9]" : "h-2.5 grow"} />
            {i ? <div className="-mx-1 size-5 rounded-full border-[5px] border-[#e9e9e9] bg-white" /> : <div className="size-[35px] rounded-full border-[5px] border-[#9bdbf8] bg-white" />}
            <div className={i < 4 ? "h-2.5 grow bg-[#e9e9e9]" : "h-2.5 grow"} />
          </div>
          <div className={(i ? "text-[#999]" : "text-[#666]") + " mt-[13px] whitespace-nowrap text-[29px] leading-10 tracking-[-0.35px]"}>{s}</div>
        </div>
      ))}
    </div>
  );
}

function Modebar() {
  return (
    <div className="flex h-10 items-center fill-[#d3d3d3]">
      <svg className="size-10" viewBox="0 0 118 118">
        <path fillRule="evenodd" d="M12 30H30L36 12H82L88 30H106Q118 30 118 42V96Q118 108 106 108H12Q0 108 0 96V42Q0 30 12 30ZM59 36A30 30 0 1 0 59 96A30 30 0 1 0 59 36ZM59 50A16 16 0 1 1 59 82A16 16 0 1 1 59 50ZM101 42A5 5 0 1 0 101 52A5 5 0 1 0 101 42Z" />
      </svg>
      <svg className="ml-10 size-10" viewBox="0 0 118 118">
        <path fill="#999" d="M59 0L82 23H67V51H96V36L118 59L96 82V67H67V96H82L59 118L36 96H51V67H22V82L0 59L22 36V51H51V23H36Z" />
      </svg>
      <svg className="ml-5 size-10" viewBox="0 0 118 118">
        {[0, 34, 67, 101].map((a) => [0, 34, 67, 101].map((b) => (a === 0 || a === 101 || b === 0 || b === 101) && <rect key={a + "-" + b} x={a} y={b} width="17" height="17" />))}
      </svg>
      <svg className="ml-5 size-10" viewBox="0 0 118 118" fill="none" stroke="#d3d3d3">
        <ellipse cx="60" cy="47" rx="53" ry="39" strokeWidth="10" transform="rotate(-8 60 47)" />
        <ellipse cx="32" cy="77" rx="18" ry="16" strokeWidth="7" />
        <path d="M40 76Q50 84 44 94L26 115" strokeWidth="8" />
      </svg>
      <svg className="ml-10 size-10" viewBox="0 0 118 118"><path fillRule="evenodd" d="M6 6H112V112H6ZM51 30V51H30V67H51V90H67V67H88V51H67V30Z" /></svg>
      <svg className="ml-5 size-10" viewBox="0 0 118 118"><path fillRule="evenodd" d="M6 6H112V112H6ZM30 51V67H88V51Z" /></svg>
      <svg className="ml-5 size-10" viewBox="0 0 118 118"><path d="M59 17L80 34V17H96V47L112 61L104 69L59 32L14 69L6 61L52 19Q59 14 66 19ZM59 39L96 68V102H68V78H51V102H22V68Z" /></svg>
      <svg className="ml-10 size-10" viewBox="0 0 118 118">
        <rect width="118" height="118" rx="16" fill="#373737" />
        <g fill="#fff"><rect x="20" y="65" width="12" height="34" rx="6" /><rect x="42" y="43" width="12" height="56" rx="6" /><rect x="64" y="65" width="12" height="34" rx="6" /><rect x="85" y="43" width="12" height="56" rx="6" /></g>
        <circle cx="26" cy="27" r="6" fill="#ff5c8a" /><circle cx="26" cy="49" r="6" fill="#ff5c8a" /><circle cx="48" cy="27" r="6" fill="#e58bb5" /><circle cx="70" cy="27" r="6" fill="#bfb3dd" /><circle cx="70" cy="49" r="6" fill="#bfb3dd" /><circle cx="91" cy="27" r="6" fill="#9be5f7" />
      </svg>
    </div>
  );
}

const years = [2010, 2011, 2012, 2013, 2014, 2015, 2016, 2017, 2018, 2019, 2020, 2021, 2022, 2023];

function Controls() {
  return (
    <div className="ml-[426px] mt-[150px] flex font-['DejaVu_Sans',sans-serif] text-[#2a3f5f]">
      <div className="mt-[26px] flex h-[85px] gap-[3px]">
        <button className="flex w-[89.500px] items-center justify-center rounded-[5px] border-2 border-[#bec8d9] pb-[7px] pr-[3px]">
          <svg className="h-[23px] w-5" viewBox="0 0 20 23"><path d="M0 0L20 11.500L0 23Z" fill="#2a3f5f" /></svg>
        </button>
        <button className="flex w-[89.500px] items-center justify-center rounded-[5px] border-2 border-[#bec8d9] pb-[5px] pr-[4px]">
          <span className="size-[18px] bg-[#2a3f5f]" />
        </button>
      </div>
      <div className="ml-[22px] w-[1740px]">
        <div className="h-[61px] pt-[11px] text-[29.500px] leading-[34px] tracking-[0.2px]">year=2023</div>
        <div className="ml-[18px] flex h-[52px] w-[1675px] items-center">
          <div className="h-[15px] grow rounded-full border-2 border-b-3 border-[#bec8d9] bg-[#f8fafd]" />
          <div className="-ml-1 size-[52px] shrink-0 rounded-full border-2 border-[#bec8d9] bg-[#f8fafd]" />
        </div>
        <div className="-ml-[39px] mt-3 flex w-[1769px]">
          {years.map((y) => (
            <div key={y} className="flex grow basis-0 flex-col items-center">
              <span className="h-[17px] w-0.5 bg-[#333]" />
              <span className="mt-3 text-[29.500px] leading-[34px]">{y}</span>
            </div>
          ))}
        </div>
      </div>
    </div>
  );
}

export default function App() {
  return (
    <div className="h-[1756px] w-[2510px] overflow-hidden bg-white font-['Open_Sans',sans-serif] text-[#212529]">
      <Browser />
      <h1 className="ml-[222px] mt-[42px] h-[135px] whitespace-nowrap text-[97px] font-semibold leading-[120px] tracking-[-2.100px]">Rats, Rodents &amp; NYC</h1>
      <div className="ml-[10.500px]"><Steps /></div>
      <h2 className="ml-[222px] h-[110px] whitespace-nowrap text-[77px] font-semibold leading-[98px] tracking-[-0.750px]">Rat Sightings over Time</h2>
      <div className="ml-[1987px] mt-[33px]"><Modebar /></div>
      <div className="ml-[442px] mt-[100px]"><MapView /></div>
      <Controls />
    </div>
  );
}
